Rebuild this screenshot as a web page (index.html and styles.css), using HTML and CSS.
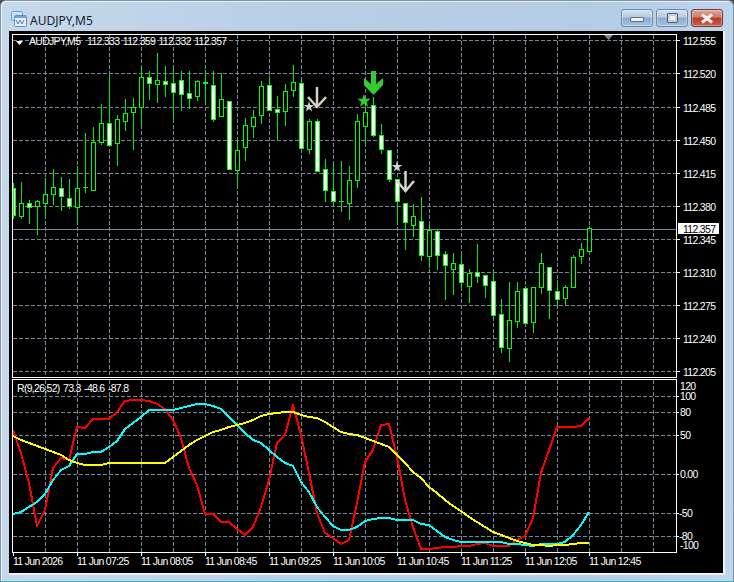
FILE: index.html
```html
<!DOCTYPE html>
<html lang="en">
<head>
<meta charset="utf-8">
<title>AUDJPY,M5</title>
<link rel="stylesheet" href="styles.css">
</head>
<body>
<div class="window">
  <header class="titlebar">
    <svg class="app-icon" viewBox="0 0 16 16" width="16" height="16">
      <rect class="ai-back" x="0.5" y="0.5" width="11" height="9" rx="1"/>
      <rect class="ai-front" x="3.5" y="4.5" width="12" height="11" rx="1"/>
      <path class="ai-bar" d="M4 5h11v2H4z"/>
      <path class="ai-wave" d="M5 9l2 4 2-4 2 4 2-4"/>
    </svg>
    <span class="title">AUDJPY,M5</span>
    <div class="buttons">
      <button class="wbtn"><span class="ico-min"></span></button>
      <button class="wbtn"><span class="ico-max"></span></button>
      <button class="wbtn close">
        <svg viewBox="0 0 16 11" width="16" height="11"><path class="x-mark" d="M3 1.5l10 8M13 1.5l-10 8"/></svg>
      </button>
    </div>
  </header>
  <main class="chart">
    <svg class="pane" viewBox="12 34 711 344" width="711" height="344">
      <path class="grid" d="M45.5 35V377M77.5 35V377M109.5 35V377M141.5 35V377M173.5 35V377M205.5 35V377M237.5 35V377M269.5 35V377M301.5 35V377M333.5 35V377M365.5 35V377M397.5 35V377M429.5 35V377M461.5 35V377M493.5 35V377M525.5 35V377M557.5 35V377M589.5 35V377M621.5 35V377M653.5 35V377"/>
      <path class="grid" d="M13 40.5H676M13 73.5H676M13 107.5H676M13 140.5H676M13 173.5H676M13 206.5H676M13 239.5H676M13 272.5H676M13 305.5H676M13 338.5H676M13 371.5H676"/>
      <path class="priceline" d="M13 229.5H676"/>
      <path class="wick" d="M13.5 183V219M21.5 182V219M29.5 200V224M37.5 200V235M45.5 178V217M53.5 169V205M61.5 177V211M69.5 179V209M77.5 166V223M85.5 133V193M93.5 127V190M101.5 104V145M109.5 75V145M117.5 115V166M125.5 99V131M133.5 98V150M141.5 67V127M149.5 71V100M157.5 53V103M165.5 66V97M173.5 69V121M181.5 71V111M189.5 71V109M197.5 80V101M205.5 70V103M213.5 71V122M221.5 73V116M237.5 141V186M245.5 118V161M253.5 110V138M261.5 81V124M269.5 76V110M277.5 96V140M285.5 84V126M293.5 65V97M301.5 80V150M309.5 119V154M317.5 119V171M325.5 159V202M333.5 164V206M341.5 161V212M349.5 166V220M357.5 114V188M365.5 100V145M373.5 97V137M381.5 124V154M389.5 150V182M397.5 179V223M405.5 203V250M413.5 204V237M421.5 197V261M429.5 225V268M437.5 230V270M445.5 251V300M453.5 253V295M461.5 255V289M469.5 269V303M477.5 244V283M485.5 275V298M493.5 269V319M501.5 299V353M509.5 282V362M517.5 282V328M525.5 286V325M533.5 287V333M541.5 253V294M549.5 267V319M557.5 280V307M565.5 285V305M573.5 255V288M581.5 243V264M589.5 226V253M83 187.5h5M339 201.5h5"/>
      <path class="body-up" d="M19.5 203.5h4v13h-4zM35.5 201.5h4v5h-4zM43.5 194.5h4v9h-4zM51.5 187.5h4v7h-4zM75.5 188.5h4v19h-4zM91.5 142.5h4v48h-4zM99.5 123.5h4v19h-4zM115.5 119.5h4v24h-4zM123.5 113.5h4v8h-4zM131.5 107.5h4v5h-4zM139.5 77.5h4v30h-4zM155.5 80.5h4v4h-4zM195.5 81.5h4v15h-4zM203.5 82.5h4v1h-4zM219.5 99.5h4v17h-4zM235.5 150.5h4v20h-4zM243.5 125.5h4v22h-4zM251.5 117.5h4v9h-4zM259.5 86.5h4v29h-4zM283.5 91.5h4v20h-4zM291.5 82.5h4v8h-4zM307.5 121.5h4v28h-4zM347.5 180.5h4v23h-4zM355.5 121.5h4v59h-4zM363.5 112.5h4v14h-4zM411.5 216.5h4v9h-4zM427.5 230.5h4v26h-4zM451.5 263.5h4v6h-4zM467.5 273.5h4v13h-4zM507.5 320.5h4v28h-4zM515.5 291.5h4v30h-4zM531.5 287.5h4v35h-4zM539.5 263.5h4v24h-4zM563.5 287.5h4v11h-4zM571.5 257.5h4v30h-4zM579.5 249.5h4v7h-4zM587.5 228.5h4v23h-4z"/>
      <path class="body-down" d="M13 188.5h2.500v27h-2.500zM27.5 203.5h4v4h-4zM59.5 188.500h4v8h-4zM67.5 198.5h4v8h-4zM107.5 123.5h4v22h-4zM147.5 77.5h4v6h-4zM163.5 81.5h4v3h-4zM171.5 83.5h4v9h-4zM179.5 80.5h4v14h-4zM187.5 93.5h4v5h-4zM211.5 85.5h4v34h-4zM227.5 101.5h4v68h-4zM267.5 85.5h4v25h-4zM275.5 109.5h4v3h-4zM299.5 83.5h4v65h-4zM315.5 121.5h4v50h-4zM323.5 169.5h4v21h-4zM331.5 191.5h4v10h-4zM371.5 105.5h4v30h-4zM379.5 135.5h4v14h-4zM387.5 150.5h4v29h-4zM395.5 179.5h4v22h-4zM403.5 203.5h4v19h-4zM419.5 221.5h4v34h-4zM435.5 231.5h4v24h-4zM443.5 254.5h4v11h-4zM459.5 264.5h4v18h-4zM475.5 272.5h4v4h-4zM483.5 275.5h4v10h-4zM491.5 281.5h4v34h-4zM499.5 314.5h4v33h-4zM523.5 288.5h4v35h-4zM547.5 267.5h4v23h-4zM555.5 291.5h4v8h-4z"/>
      <polygon class="arrow-green" points="371,71 376,71 376,84 383,78 383,85 374,94.500 373,94.500 364,85 364,78 371,84"/>
      <path class="arrow-silver" d="M317 87V107M308 97l9 10 9-10"/>
      <path class="arrow-silver" d="M405.500 171V191M397 181l8.500 10 8.500-10"/>
      <polygon class="star-green" points="364,94 365.700,98.700 370.700,98.800 366.700,101.900 368.100,106.700 364,103.800 359.900,106.700 361.300,101.900 357.300,98.800 362.300,98.700"/>
      <polygon class="star-silver" points="309,101 310.200,104.900 314.200,105 311,107.500 312.100,111.400 309,109.100 305.900,111.400 307,107.500 303.800,105 307.800,104.900"/>
      <polygon class="star-silver" points="397,161 398.200,164.900 402.200,165 399,167.500 400.100,171.400 397,169.100 393.900,171.400 395,167.500 391.800,165 395.800,164.900"/>
      <polygon class="marker" points="604,35 613,35 608.500,40"/>
      <rect class="frame" x="12.500" y="34.500" width="664" height="343"/>
      <path class="tick" d="M677 40.500h3M677 73.500h3M677 107.500h3M677 140.500h3M677 173.500h3M677 206.500h3M677 239.500h3M677 272.500h3M677 305.500h3M677 338.500h3M677 371.500h3"/>
      <polygon class="legend-mark" points="16,41 23,41 19.500,45"/>
      <text class="label legend" x="29" y="44.500">AUDJPY,M5&#160; 112.333 112.359 112.332 112.357</text>
      <text class="label" x="683" y="44.500">112.555</text>
      <text class="label" x="683" y="77.500">112.520</text>
      <text class="label" x="683" y="111.500">112.485</text>
      <text class="label" x="683" y="144.500">112.450</text>
      <text class="label" x="683" y="177.500">112.415</text>
      <text class="label" x="683" y="210.500">112.380</text>
      <text class="label" x="683" y="243.500">112.345</text>
      <text class="label" x="683" y="276.500">112.310</text>
      <text class="label" x="683" y="309.500">112.275</text>
      <text class="label" x="683" y="342.500">112.240</text>
      <text class="label" x="683" y="376">112.205</text>
      <rect class="price-box" x="678" y="223" width="41" height="11"/>
      <text class="label dark" x="683" y="232.500">112.357</text>
    </svg>
    <svg class="pane" viewBox="12 378 711 195" width="711" height="195">
      <path class="grid" d="M45.500 380V552M77.500 380V552M109.500 380V552M141.500 380V552M173.500 380V552M205.500 380V552M237.500 380V552M269.500 380V552M301.500 380V552M333.500 380V552M365.500 380V552M397.500 380V552M429.500 380V552M461.500 380V552M493.500 380V552M525.500 380V552M557.500 380V552M589.500 380V552M621.500 380V552M653.500 380V552"/>
      <path class="grid" d="M13 396.500H676M13 412.500H676M13 435.500H676M13 474.500H676M13 513.500H676M13 536.500H676"/>
      <polyline class="line red" points="13,430 21,453 29,483 37,526 45,510 53,468 61,458 69,460 77,427 85,428 93,419 101,419 109,419 117,412 125,401 133,400 141,400 149,401 157,404 165,409 173,420 181,438 189,468 197,485 205,514 213,514 221,522 229,522 237,529 245,535 253,527 261,507 269,480 277,443 285,435 293,405 301,435 309,473 317,513 325,533 333,538 341,544 349,540 357,503 365,462 373,450 381,425 389,424 397,457 405,500 413,527 421,549 429,549 437,548 445,547 453,547 461,546 469,546 477,544 485,543 493,546 501,546 509,546 517,540 525,536 533,518 541,473 549,450 557,427 565,427 573,427 581,426 589,418"/>
      <polyline class="line cyan" points="13,514 21,512 29,507 37,502 45,494 53,480 61,470 69,466 77,454 85,454 93,452 101,452 109,447 117,441 125,429 133,423 141,417 149,410 157,410 165,410 173,410 181,408 189,406 197,404 205,404 213,406 221,409 229,417 237,425 245,433 253,440 261,443 269,450 277,457 285,463 293,466 301,482 309,492 317,507 325,517 333,526 341,530 349,530 357,527 365,521 373,519 381,518 389,518 397,520 405,520 413,520 421,524 429,525 437,531 445,537 453,540 461,542 469,542 477,542 485,542 493,542 501,542 509,544 517,544 525,545 533,546 541,544 549,544 557,544 565,542 573,535 581,525 589,512"/>
      <polyline class="line yellow" points="13,436 21,440 29,443 37,446 45,449 53,452 61,455 69,460 77,463 85,465 93,465 101,465 109,463 117,463 125,463 133,463 141,463 149,463 157,463 165,463 173,457 181,451 189,445 197,440 205,436 213,432 221,430 229,427 237,425 245,423 253,420 261,416 269,414 277,413 285,412 293,412 301,415 309,417 317,418 325,422 333,427 341,432 349,434 357,435 365,438 373,441 381,444 389,447 397,455 405,463 413,472 421,478 429,487 437,493 445,500 453,506 461,511 469,517 477,522 485,527 493,532 501,535 509,538 517,541 525,543 533,545 541,545 549,546 557,545 565,545 573,544 581,543 589,543"/>
      <rect class="frame" x="12.500" y="379.500" width="664" height="173"/>
      <path class="tick" d="M677 396.500h2M677 412.500h2M677 435.500h2M677 474.500h2M677 513.500h2M677 536.500h2M13.500 553v3M77.500 553v3M141.500 553v3M205.500 553v3M269.500 553v3M333.500 553v3M397.500 553v3M461.500 553v3M525.500 553v3M589.500 553v3"/>
      <text class="label legend" x="17" y="392">R(9,26,52) 73.3 -48.6 -87.8</text>
      <text class="label" x="680" y="390">120</text>
      <text class="label" x="680" y="400">100</text>
      <text class="label" x="680" y="416">80</text>
      <text class="label" x="680" y="439">50</text>
      <text class="label" x="680" y="478">0.00</text>
      <text class="label" x="679" y="517">-50</text>
      <text class="label" x="679" y="540">-80</text>
      <text class="label" x="680" y="549">-100</text>
      <text class="label" x="13" y="565">11 Jun 2026</text>
      <text class="label" x="77" y="565">11 Jun 07:25</text>
      <text class="label" x="141" y="565">11 Jun 08:05</text>
      <text class="label" x="205" y="565">11 Jun 08:45</text>
      <text class="label" x="269" y="565">11 Jun 09:25</text>
      <text class="label" x="333" y="565">11 Jun 10:05</text>
      <text class="label" x="397" y="565">11 Jun 10:45</text>
      <text class="label" x="461" y="565">11 Jun 11:25</text>
      <text class="label" x="525" y="565">11 Jun 12:05</text>
      <text class="label" x="589" y="565">11 Jun 12:45</text>
    </svg>
  </main>
</div>
</body>
</html>
```

FILE: styles.css
```css
html, body {
  margin: 0;
  padding: 0;
  background: #4a4f55;
}
.window {
  box-sizing: border-box;
  width: 734px;
  height: 582px;
  display: flex;
  flex-direction: column;
  background: linear-gradient(90deg, #c6d9eb 0%, #b9cfe6 40%, #b3cbe3 80%, #bed5ec 100%);
  border-radius: 6px 6px 0 0;
  border: 1px solid #7d93a8;
  border-bottom: 1px solid #3fb7c8;
  box-shadow: inset 1px 1px 0 rgba(255, 255, 255, 0.7);
}
.titlebar {
  box-sizing: border-box;
  height: 30px;
  flex: none;
  display: flex;
  align-items: flex-start;
  padding: 8px 10px 0 10px;
}
.app-icon {
  flex: none;
  margin-top: 2px;
}
.ai-back { fill: #cfe0f2; stroke: #6f9bd0; }
.ai-front { fill: #e8f1fb; stroke: #5b8fd0; }
.ai-bar { fill: #6fa3dd; }
.ai-wave { fill: none; stroke: #4a78b8; stroke-width: 1; }
.title {
  margin: 3px 0 0 3px;
  font: 12px "Noto Sans", "Liberation Sans", sans-serif;
  color: #14202c;
}
.buttons {
  margin-left: auto;
  display: flex;
  gap: 3px;
}
.wbtn {
  box-sizing: border-box;
  width: 32px;
  height: 18px;
  padding: 0;
  border: 1px solid #6e8aa6;
  border-radius: 3px;
  display: flex;
  align-items: center;
  justify-content: center;
  background: linear-gradient(180deg, #d3e1ef 0%, #b4c9de 45%, #8aaccd 50%, #a6c3e0 100%);
  box-shadow: inset 0 0 0 1px rgba(255, 255, 255, 0.35);
}
.wbtn.close {
  border-color: #6d3a3c;
  background: linear-gradient(180deg, #dfa598 0%, #cf7a6c 45%, #b8392b 50%, #c8604c 100%);
}
.ico-min {
  box-sizing: border-box;
  width: 14px;
  height: 5px;
  margin-top: 3px;
  background: #f0f3f6;
  border: 1px solid #5f6f80;
  border-radius: 1px;
}
.ico-max {
  box-sizing: border-box;
  width: 11px;
  height: 10px;
  background: #eef2f6;
  border: 1px solid #4e5e70;
  border-radius: 1px;
  box-shadow: inset 0 0 0 2px #c5d0dc;
}
.x-mark {
  fill: none;
  stroke: #f4f1ee;
  stroke-width: 3;
}
.chart {
  flex: none;
  width: 714px;
  height: 542px;
  margin-left: 8px;
  box-sizing: border-box;
  background: #000;
  padding: 3px 0 0 3px;
  box-shadow: 1px 1px 0 1px #eaf1f8;
  overflow: hidden;
}
.pane {
  display: block;
}
.grid {
  fill: none;
  stroke: #778899;
  stroke-width: 1;
  stroke-dasharray: 4 2;
  shape-rendering: crispEdges;
}
.priceline {
  fill: none;
  stroke: #778899;
  stroke-width: 1;
  shape-rendering: crispEdges;
}
.wick {
  fill: none;
  stroke: #00e81c;
  stroke-width: 1;
  shape-rendering: crispEdges;
}
.body-up, .body-down {
  stroke: #00ff00;
  stroke-width: 1;
  shape-rendering: crispEdges;
}
.body-up { fill: #000; }
.body-down { fill: #fff; }
.arrow-green { fill: #30cc30; }
.star-green { fill: #30cc30; }
.arrow-silver {
  fill: none;
  stroke: #d8d2c4;
  stroke-width: 2.5;
}
.star-silver { fill: #d0d4da; }
.marker { fill: #778899; }
.legend-mark { fill: #fff; }
.frame {
  fill: none;
  stroke: #fff;
  stroke-width: 1;
  shape-rendering: crispEdges;
}
.tick {
  fill: none;
  stroke: #fff;
  stroke-width: 1;
  shape-rendering: crispEdges;
}
.line {
  fill: none;
  stroke-width: 2;
  stroke-linejoin: round;
  shape-rendering: crispEdges;
}
.red { stroke: #ff0000; }
.cyan { stroke: #00ffff; }
.yellow { stroke: #ffff00; }
.label {
  font-family: "Liberation Sans", Arial, sans-serif;
  font-size: 10.5px;
  letter-spacing: -0.7px;
  fill: #fff;
}
.label.legend { word-spacing: 1.2px; }
.label.dark { fill: #000; }
.price-box { fill: #fff; }
```
